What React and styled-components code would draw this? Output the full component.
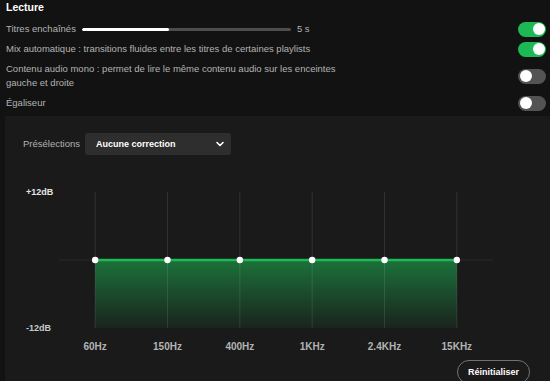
import React from "react";
import styled, { createGlobalStyle } from "styled-components";

const Global = createGlobalStyle`
  html, body { margin: 0; padding: 0; background: #121212; }
  body {
    font-family: "Liberation Sans", Arial, sans-serif;
    color: #fff;
    overflow: hidden;
  }
  * { box-sizing: border-box; }
`;

const Page = styled.div`
  width: 550px;
  height: 381px;
  overflow: hidden;
  display: flex;
  flex-direction: column;
`;

const Section = styled.section`
  padding: 0 4px 0 6px;
  display: flex;
  flex-direction: column;
`;

const Heading = styled.h2`
  margin: 0 0 5px;
  font-size: 10.5px;
  line-height: 14px;
  font-weight: 700;
  color: #fff;
`;

const Row = styled.div`
  display: flex;
  align-items: center;
  justify-content: space-between;
  min-height: 20px;
  padding: 3px 0;
`;

const LeftGroup = styled.div`
  display: flex;
  align-items: center;
  gap: 6px;
`;

const Label = styled.span`
  font-size: 9.5px;
  line-height: 14px;
  color: #b3b3b3;
  max-width: ${(p) => p.$max || "none"};
`;

const Track = styled.div`
  width: 209px;
  height: 3px;
  border-radius: 2px;
  background: #4d4d4d;
  overflow: hidden;
`;

const Fill = styled.div`
  height: 100%;
  background: #fff;
  border-radius: 2px;
`;

const Toggle = styled.div`
  position: relative;
  flex: none;
  width: 28px;
  height: 15px;
  margin: -1px 0;
  border-radius: 8px;
  background: ${(p) => (p.$on ? "#1db954" : "#535353")};
  &::after {
    content: "";
    position: absolute;
    top: 1.5px;
    left: ${(p) => (p.$on ? "14.5px" : "1.5px")};
    width: 12px;
    height: 12px;
    border-radius: 50%;
    background: #fff;
  }
`;

const EqPanel = styled.div`
  flex: 1;
  margin: 3px 0 0 5px;
  background: #1a1a1a;
  padding: 17px 20px 0 18px;
  display: flex;
  flex-direction: column;
`;

const PresetRow = styled.div`
  display: flex;
  align-items: center;
  gap: 5px;
`;

const Select = styled.button`
  display: flex;
  align-items: center;
  justify-content: space-between;
  width: 146px;
  height: 22px;
  padding: 0 7px 0 11px;
  border: none;
  border-radius: 3px;
  background: #2e2e2e;
  color: #fff;
  font-family: inherit;
  font-size: 9px;
  font-weight: 700;
`;

const ChartGrid = styled.div`
  margin-top: 37px;
  display: grid;
  grid-template-columns: 36px 434px;
  grid-template-rows: 136px auto;
`;

const DbAxis = styled.div`
  display: flex;
  flex-direction: column;
  justify-content: space-between;
  margin: -6px 0;
  padding-left: 3px;
`;

const DbLabel = styled.span`
  font-size: 9px;
  line-height: 12px;
  font-weight: 700;
  color: ${(p) => p.$color || "#c8c8c8"};
`;

const FreqRow = styled.div`
  grid-column: 2;
  display: grid;
  grid-template-columns: repeat(6, 1fr);
  margin-top: 13px;
`;

const FreqLabel = styled.span`
  text-align: center;
  font-size: 10px;
  line-height: 12px;
  font-weight: 700;
  color: #b3b3b3;
`;

const ButtonRow = styled.div`
  display: flex;
  justify-content: flex-end;
  margin-top: 7px;
`;

const ResetButton = styled.button`
  height: 24px;
  padding: 0 10px;
  border: 1px solid #727272;
  border-radius: 12px;
  background: transparent;
  color: #fff;
  font-family: inherit;
  font-size: 9px;
  font-weight: 700;
`;

const freqs = ["60Hz", "150Hz", "400Hz", "1KHz", "2.4KHz", "15KHz"];

function EqChart() {
  const w = 434;
  const h = 136;
  const step = w / 6;
  const xs = freqs.map((_, i) => step / 2 + step * i);
  const mid = h / 2;
  return (
    <svg width={w} height={h} viewBox={`0 0 ${w} ${h}`}>
      <defs>
        <linearGradient id="eqfill" x1="0" y1="0" x2="0" y2="1">
          <stop offset="0" stopColor="#1db954" stopOpacity="0.55" />
          <stop offset="1" stopColor="#1db954" stopOpacity="0.06" />
        </linearGradient>
      </defs>
      <rect x={xs[0]} y={mid} width={xs[5] - xs[0]} height={h - mid} fill="url(#eqfill)" />
      <line x1="0" y1={mid} x2={w} y2={mid} stroke="rgba(255,255,255,0.08)" strokeWidth="1" />
      {xs.map((x) => (
        <line key={x} x1={x} y1="0" x2={x} y2={h} stroke="rgba(255,255,255,0.1)" strokeWidth="1" />
      ))}
      <line x1={xs[0]} y1={mid} x2={xs[5]} y2={mid} stroke="#1db954" strokeWidth="2.5" />
      {xs.map((x) => (
        <circle key={`d${x}`} cx={x} cy={mid} r="3.2" fill="#fff" />
      ))}
    </svg>
  );
}

export default function App() {
  const crossfade = 0.416;
  return (
    <Page>
      <Global />
      <Section>
        <Heading>Lecture</Heading>
        <Row>
          <LeftGroup>
            <Label>Titres enchaînés</Label>
            <Track>
              <Fill style={{ width: `${crossfade * 100}%` }} />
            </Track>
            <Label>5 s</Label>
          </LeftGroup>
          <Toggle $on />
        </Row>
        <Row>
          <Label>Mix automatique : transitions fluides entre les titres de certaines playlists</Label>
          <Toggle $on />
        </Row>
        <Row>
          <Label $max="355px">
            Contenu audio mono : permet de lire le même contenu audio sur les enceintes gauche et droite
          </Label>
          <Toggle />
        </Row>
        <Row>
          <Label>Égaliseur</Label>
          <Toggle />
        </Row>
      </Section>
      <EqPanel>
        <PresetRow>
          <Label>Présélections</Label>
          <Select>
            Aucune correction
            <svg width="8" height="6" viewBox="0 0 8 6">
              <polyline points="1,1.5 4,4.5 7,1.5" fill="none" stroke="#fff" strokeWidth="1.6" strokeLinecap="round" strokeLinejoin="round" />
            </svg>
          </Select>
        </PresetRow>
        <ChartGrid>
          <DbAxis>
            <DbLabel $color="#e6e6e6">+12dB</DbLabel>
            <DbLabel>-12dB</DbLabel>
          </DbAxis>
          <EqChart />
          <FreqRow>
            {freqs.map((f) => (
              <FreqLabel key={f}>{f}</FreqLabel>
            ))}
          </FreqRow>
        </ChartGrid>
        <ButtonRow>
          <ResetButton>Réinitialiser</ResetButton>
        </ButtonRow>
      </EqPanel>
    </Page>
  );
}
